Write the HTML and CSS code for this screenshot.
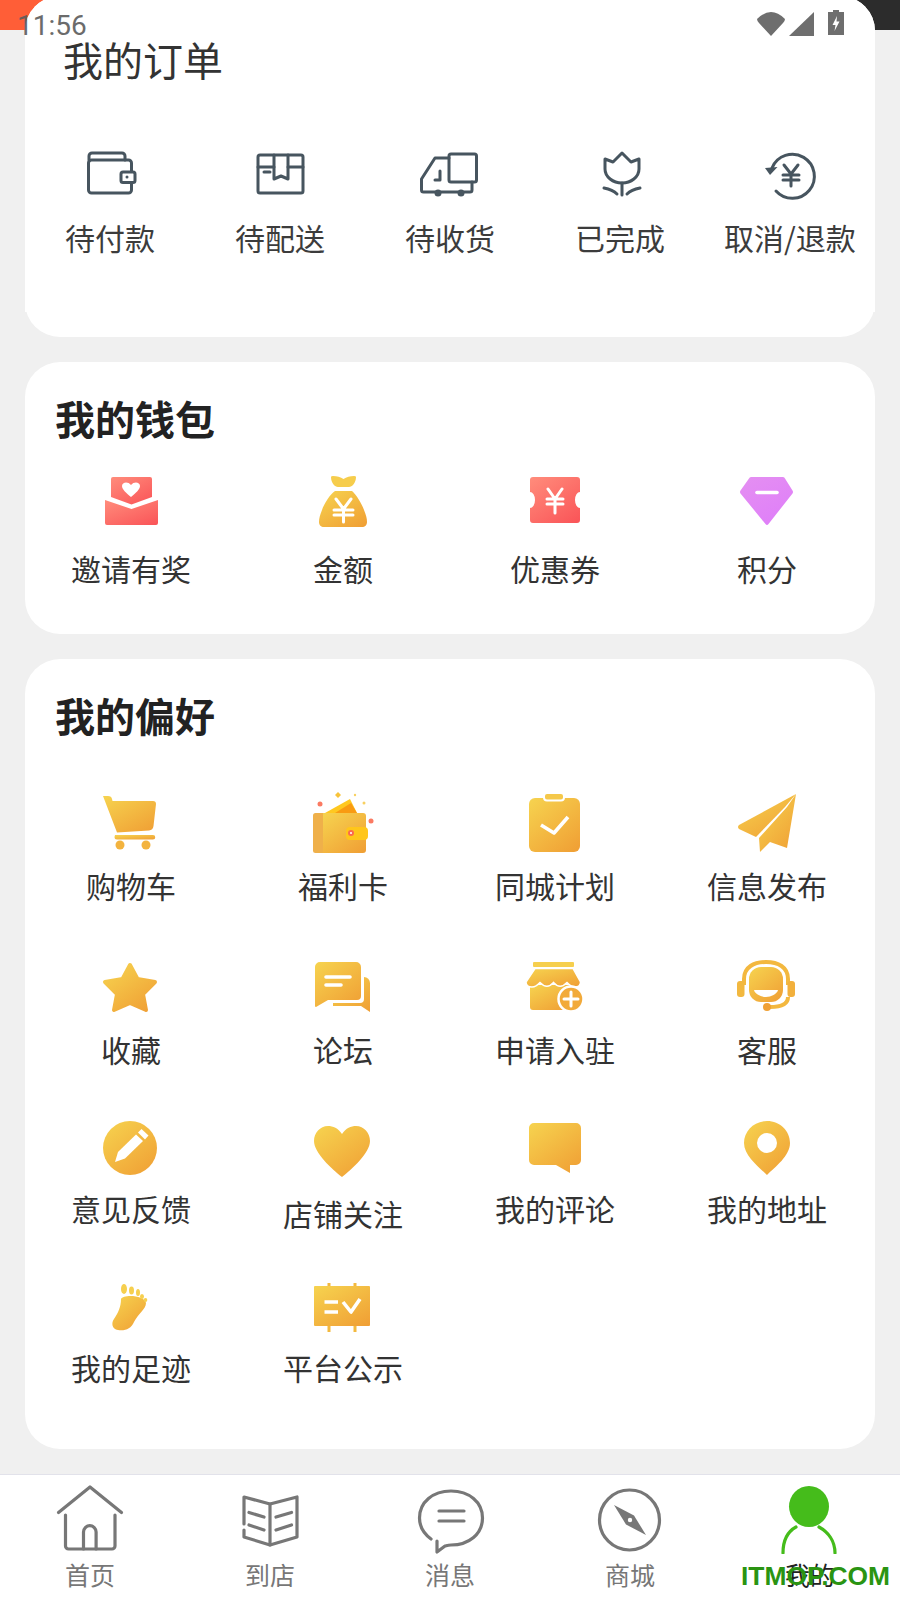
FILE: index.html
```html
<!DOCTYPE html>
<html lang="zh-CN">
<head>
    <meta charset="UTF-8">
    <meta name="viewport" content="width=device-width, initial-scale=1.0">
    <title>我的</title>
    <link rel="stylesheet" href="styles.css">
</head>
<body>
    <!-- shared gradients for the filled icons -->
    <svg class="defs" width="0" height="0">
        <defs>
            <linearGradient id="gold" x1="0.1" y1="0" x2="0.9" y2="1">
                <stop offset="0" stop-color="#f6d14e"/>
                <stop offset="1" stop-color="#f0a035"/>
            </linearGradient>
            <linearGradient id="red" x1="0.1" y1="0" x2="0.9" y2="1">
                <stop offset="0" stop-color="#ff8a7a"/>
                <stop offset="1" stop-color="#fa5659"/>
            </linearGradient>
            <linearGradient id="purple" x1="0.2" y1="0" x2="0.8" y2="1">
                <stop offset="0" stop-color="#e48ef2"/>
                <stop offset="1" stop-color="#df7ef9"/>
            </linearGradient>
        </defs>
    </svg>

    <div class="status-bar">
        <span class="status-time">11:56</span>
        <svg class="status-icons" width="88" height="30" viewBox="0 0 88 30">
            <path d="M0 11Q14 -3 28 11Q28 13 26 15L14 28L2 15Q0 13 0 11Z"/>
            <path d="M57 4V28H32Z"/>
            <path d="M76 2H82V4H87V27H71V4H76Z"/>
            <path class="bolt" d="M80 8L75.500 17H78.500L77.500 23L82.500 13.500H79.500Z"/>
        </svg>
    </div>

    <div class="page">
        <div class="top-strip"></div>

        <section class="card card-orders">
            <div class="orders-panel">
                <h2 class="orders-title">我的订单</h2>
                <div class="orders-row">
                    <div class="item">
                        <svg class="icon line-icon" viewBox="0 0 60 60">
                            <path d="M9 16V12a3 3 0 0 1 3-3H42a3 3 0 0 1 3 3V16"/>
                            <rect x="8.500" y="16" width="43" height="33" rx="3"/>
                            <rect class="white" x="41" y="28" width="14" height="10.500" rx="2"/>
                            <circle class="dot" cx="47" cy="33" r="1.500"/>
                        </svg>
                        <span class="label">待付款</span>
                    </div>
                    <div class="item">
                        <svg class="icon line-icon" viewBox="0 0 60 60">
                            <rect x="8" y="11" width="45" height="38" rx="2"/>
                            <path d="M8 23H24M38 23H53"/>
                            <path d="M24 11V35L31 32L38 35V11"/>
                            <path d="M14 28H20"/>
                        </svg>
                        <span class="label">待配送</span>
                    </div>
                    <div class="item">
                        <svg class="icon line-icon" viewBox="0 0 60 60">
                            <rect x="29" y="10" width="27.500" height="28" rx="2"/>
                            <path d="M29 14H15L1.500 35V46a2 2 0 0 0 2 2H50a2 2 0 0 0 2-2V38"/>
                            <path d="M20 27V36H15"/>
                            <circle class="dot" cx="18" cy="49" r="3.500"/>
                            <circle class="dot" cx="41" cy="49" r="3.500"/>
                        </svg>
                        <span class="label">待收货</span>
                    </div>
                    <div class="item">
                        <svg class="icon line-icon" viewBox="0 0 60 60">
                            <path d="M15 15L23 18L32 9L41 18L49 15V25C49 33 41 39 32 39C23 39 15 33 15 25Z"/>
                            <path d="M32 39V51"/>
                            <path d="M14 44C19 45 24 47 27 50M50 44C45 45 40 47 37 50"/>
                        </svg>
                        <span class="label">已完成</span>
                    </div>
                    <div class="item">
                        <svg class="icon line-icon" viewBox="0 0 60 60">
                            <path d="M12 24A22 22 0 1 1 16 47"/>
                            <path class="dot" d="M5 24L17.500 23L10 31Z"/>
                            <path d="M24 21L31 30L38 21M23 31H39M23 36H39M31 30V42"/>
                        </svg>
                        <span class="label label-wide">取消/退款</span>
                    </div>
                </div>
            </div>
        </section>

        <section class="card card-wallet">
            <h2 class="card-title">我的钱包</h2>
            <div class="wallet-row">
                <div class="item">
                    <svg class="icon" viewBox="0 0 60 60">
                        <path fill="url(#red)" d="M12 5H49a2 2 0 0 1 2 2V25L30.500 32.500L10 25V7a2 2 0 0 1 2-2Z"/>
                        <path fill="url(#red)" d="M4 28L30.500 37L57 28V51a2 2 0 0 1-2 2H6a2 2 0 0 1-2-2Z"/>
                        <path fill="#fff" d="M30 25C25 21 21 17 21 14C21 10 27 9 30 13C33 9 39 10 39 14C39 17 35 21 30 25Z"/>
                    </svg>
                    <span class="label">邀请有奖</span>
                </div>
                <div class="item">
                    <svg class="icon" viewBox="0 0 60 60">
                        <path fill="#f6cd4c" d="M17 5Q17 4 19 4Q25 4 29.500 7Q34 4 40 4Q42 4 42 5C42 11 38 15 35 15H24C21 15 17 11 17 5Z"/>
                        <path fill="url(#gold)" d="M21 19H38C42 22 48 32 50 38C52 43 53 46 53 50C53 53 51 55 48 55H10C7 55 5 53 5 50C5 46 6 43 8 38C10 32 16 22 21 19Z"/>
                        <path class="yen" d="M22 27L29.500 37L37 27M20 38H39M20 43H39M29.500 37V50"/>
                    </svg>
                    <span class="label">金额</span>
                </div>
                <div class="item">
                    <svg class="icon" viewBox="0 0 60 60">
                        <path fill="url(#red)" d="M7 5H51a3 3 0 0 1 3 3V20a5 8 0 0 0 0 16V48a3 3 0 0 1-3 3H7a3 3 0 0 1-3-3V36a5 8 0 0 0 0-16V8a3 3 0 0 1 3-3Z"/>
                        <path class="yen" d="M22 17L29 27L36 17M21 27H37M21 32H37M29 27V41"/>
                    </svg>
                    <span class="label">优惠券</span>
                </div>
                <div class="item">
                    <svg class="icon" viewBox="0 0 60 60">
                        <path fill="url(#purple)" d="M12 5H44Q45.500 5 46 6.500L53.500 18.500Q54.500 20 53.500 21.500L29.500 52Q28 54 26.500 52L1.500 21.500Q0.500 20 1.500 18.500L10 6.500Q10.500 5 12 5Z"/>
                        <path class="yen yen-thick yen-round" d="M18 20.500H38"/>
                    </svg>
                    <span class="label">积分</span>
                </div>
            </div>
        </section>

        <section class="card card-prefs">
            <h2 class="card-title">我的偏好</h2>

            <div class="prefs-row prefs-row-1">
                <div class="item">
                    <svg class="icon" viewBox="0 0 60 60">
                        <path fill="url(#gold)" d="M2 2H7Q10.500 2 11 5L11.500 7H52Q55 7 55 10L52.500 32Q52 36 48 36.500L16 38.500Z"/>
                        <path fill="url(#gold)" d="M14 41H52a2 2 0 0 1 0 4.500H16Q13.500 45.500 13.500 43Z"/>
                        <ellipse fill="#f3b33e" cx="19" cy="51" rx="4.500" ry="4.500"/>
                        <ellipse fill="#f3b33e" cx="45" cy="51" rx="4.500" ry="4.500"/>
                    </svg>
                    <span class="label">购物车</span>
                </div>
                <div class="item">
                    <svg class="icon" viewBox="0 0 60 60">
                        <path fill="#ffc820" d="M11 19L36 5L43 19Z"/>
                        <path fill="#f99b12" d="M21 19L37 9L43 19Z"/>
                        <path fill="url(#gold)" d="M9 19H49a3 3 0 0 1 3 3V56a3 3 0 0 1-3 3H9Z"/>
                        <path fill="#efb04a" d="M9 19H1.500A2.500 2.500 0 0 0-1 21.500V56.500A2.500 2.500 0 0 0 1.500 59H9Z"/>
                        <rect fill="#ffc61a" x="32" y="33" width="22" height="13" rx="4"/>
                        <circle fill="#fa6a50" cx="37" cy="39" r="3"/>
                        <circle fill="#fff" cx="37" cy="39" r="1"/>
                        <circle fill="#fb7a62" cx="6" cy="10" r="2.500"/>
                        <circle fill="#fb7a62" cx="57" cy="27" r="2.500"/>
                        <path fill="#f8c33a" d="M24 -2L27 1L24 4L21 1Z"/>
                        <circle fill="#f8d060" cx="41" cy="1" r="1.200"/>
                        <circle fill="#f8d060" cx="50" cy="9" r="1.500"/>
                    </svg>
                    <span class="label">福利卡</span>
                </div>
                <div class="item">
                    <svg class="icon" viewBox="0 0 60 60">
                        <path fill="url(#gold)" d="M9 4H48a6 6 0 0 1 6 6V52a6 6 0 0 1-6 6H9a6 6 0 0 1-6-6V10a6 6 0 0 1 6-6Z"/>
                        <rect fill="#f5c84a" stroke="#fff" stroke-width="2" x="18" y="-1" width="20" height="7.500" rx="3"/>
                        <path class="yen yen-thick" d="M15 31L28 39L42 23"/>
                    </svg>
                    <span class="label">同城计划</span>
                </div>
                <div class="item">
                    <svg class="icon" viewBox="0 0 60 60">
                        <path fill="url(#gold)" d="M57 0L0 31Q-2 33 0 35L17 43L46 13Z"/>
                        <path fill="url(#gold)" d="M57 0L48 54L31 48L21 58L20 44L48 13Z"/>
                    </svg>
                    <span class="label">信息发布</span>
                </div>
            </div>

            <div class="prefs-row prefs-row-2">
                <div class="item">
                    <svg class="icon" viewBox="0 0 60 60">
                        <path fill="url(#gold)" stroke="url(#gold)" stroke-width="4" stroke-linejoin="round" d="M29 8L36.500 22L54 25L42 37L45 53L29 46L13 53L16 37L4 25L21.500 22Z"/>
                    </svg>
                    <span class="label">收藏</span>
                </div>
                <div class="item">
                    <svg class="icon" viewBox="0 0 60 60">
                        <path fill="url(#gold)" d="M6 5H42a5 5 0 0 1 5 5V39a4 4 0 0 1-4 4H14L2 50Q1 50 1 49V10a5 5 0 0 1 5-5Z"/>
                        <path fill="url(#gold)" d="M50 20a6 6 0 0 1 6 6V55L47 49H19V46H46a4 4 0 0 0 4-4Z"/>
                        <path class="yen yen-thick yen-round" d="M12 20H36M12 28H27"/>
                    </svg>
                    <span class="label">论坛</span>
                </div>
                <div class="item">
                    <svg class="icon" viewBox="0 0 60 60">
                        <rect fill="#f6cf4e" x="7" y="5" width="41" height="5" rx="1"/>
                        <path fill="url(#gold)" d="M4 28H44V50a3 3 0 0 1-3 3H7a3 3 0 0 1-3-3Z"/>
                        <path fill="url(#gold)" stroke="#fff" stroke-width="1.500" d="M9 11.500H47L54.500 25Q54.500 30 49 30Q45 30 41 25.500Q34 33 27.500 25.500Q21 33 14 25.500Q10 30 6 30Q0 30 0 25Z"/>
                        <circle fill="#f2aa3a" stroke="#fff" stroke-width="2.500" cx="45" cy="42" r="12.500"/>
                        <path class="yen" d="M45 35V49M38 42H52"/>
                    </svg>
                    <span class="label">申请入驻</span>
                </div>
                <div class="item">
                    <svg class="icon" viewBox="0 0 60 60">
                        <path class="gold-line" d="M5 28V22C5 10 15 5 27 5C39 5 49 10 49 22V28"/>
                        <rect fill="#f2b83f" x="-2" y="24" width="7.500" height="16" rx="3"/>
                        <rect fill="#f2b03c" x="48.500" y="24" width="7.500" height="16" rx="3"/>
                        <rect fill="url(#gold)" x="10" y="10" width="34" height="35" rx="12"/>
                        <path fill="#fff" d="M15 33H39C38 37 32 40 27 40C22 40 16 37 15 33Z"/>
                        <path class="gold-line" d="M49 40C49 47 42 50 31 50"/>
                        <circle fill="#f0a035" cx="28" cy="50" r="4"/>
                    </svg>
                    <span class="label">客服</span>
                </div>
            </div>

            <div class="prefs-row prefs-row-3">
                <div class="item">
                    <svg class="icon" viewBox="0 0 60 60">
                        <circle fill="url(#gold)" cx="29" cy="29" r="27"/>
                        <path fill="#fff" d="M14 43L17 33L35 15.500L42 22L24 39.500Z"/>
                        <path fill="#fff" d="M37 13.500L40.500 10L47.500 16.500L44 20.500Z"/>
                    </svg>
                    <span class="label">意见反馈</span>
                </div>
                <div class="item item-low">
                    <svg class="icon" viewBox="0 0 60 60">
                        <path fill="url(#gold)" d="M28 15C24 9 19 7 14 7C6 7 0 14 0 22C0 34 18 50 28 58C38 50 56 34 56 22C56 14 50 7 42 7C37 7 32 9 28 15Z"/>
                    </svg>
                    <span class="label">店铺关注</span>
                </div>
                <div class="item">
                    <svg class="icon" viewBox="0 0 60 60">
                        <path fill="url(#gold)" d="M8 4H50a5 5 0 0 1 5 5V41a5 5 0 0 1-5 5H44V54L30 46H8a5 5 0 0 1-5-5V9a5 5 0 0 1 5-5Z"/>
                    </svg>
                    <span class="label">我的评论</span>
                </div>
                <div class="item">
                    <svg class="icon" viewBox="0 0 60 60">
                        <path fill="url(#gold)" fill-rule="evenodd" d="M28 2C15 2 5 12 5 24C5 37 20 48 28 56C36 48 51 37 51 24C51 12 41 2 28 2ZM28 14a10 10 0 1 1 0 20a10 10 0 1 1 0-20Z"/>
                    </svg>
                    <span class="label">我的地址</span>
                </div>
            </div>

            <div class="prefs-row prefs-row-4">
                <div class="item">
                    <svg class="icon" viewBox="0 0 60 60">
                        <path fill="url(#gold)" d="M20 22C22 17 44 18 45 26C45 32 37 37 33 45C30 52 24 54 17 53C11 52 10 46 13 42C17 36 20 30 20 22Z"/>
                        <ellipse fill="#f6cf4e" cx="23" cy="12" rx="3" ry="5"/>
                        <ellipse fill="#f6cf4e" cx="30.500" cy="13.500" rx="2.500" ry="4"/>
                        <ellipse fill="#f6cf4e" cx="37" cy="15.500" rx="2" ry="3.500"/>
                        <ellipse fill="#f6cf4e" cx="41" cy="19.500" rx="2" ry="2.500"/>
                        <ellipse fill="#f6cf4e" cx="44.500" cy="23" rx="1.800" ry="2"/>
                    </svg>
                    <span class="label">我的足迹</span>
                </div>
                <div class="item">
                    <svg class="icon" viewBox="0 0 60 60">
                        <path d="M15 6V55M41 6V55" stroke="#f3b93f" stroke-width="3"/>
                        <rect fill="url(#gold)" x="0" y="9" width="56" height="40" rx="1"/>
                        <path class="yen yen-thick" d="M10.500 25H24M10.500 35H24M29 25L37 35L46 22"/>
                    </svg>
                    <span class="label">平台公示</span>
                </div>
            </div>
        </section>

        <nav class="tabbar">
            <a class="tab">
                <svg class="tab-icon" viewBox="0 0 70 70">
                    <path d="M3.500 28.500L35 3L66.500 28.500"/>
                    <path d="M10.500 31V62a3 3 0 0 0 3 3H57a3 3 0 0 0 3-3V31"/>
                    <path d="M28.500 65V48a6.300 6.300 0 0 1 12.600 0V65"/>
                </svg>
                <span>首页</span>
            </a>
            <a class="tab">
                <svg class="tab-icon" viewBox="0 0 70 70">
                    <path d="M9 40V13L35 20L62 13V53L35 61L9 53V46"/>
                    <path d="M35 20V61"/>
                    <path d="M14 28.500L29 33M14 41L29 46M41 33L56.500 28.500M41 46L56.500 41"/>
                </svg>
                <span>到店</span>
            </a>
            <a class="tab">
                <svg class="tab-icon" viewBox="0 0 70 70">
                    <path d="M16 55C8 49 4.500 42 4.500 34C4.500 18 18 7 36 7C54 7 67.500 18 67.500 34C67.500 50 54 61 36 61C33 61 32 61.500 30 62L22 68V57"/>
                    <path d="M24 27H49M24 37H49"/>
                </svg>
                <span>消息</span>
            </a>
            <a class="tab">
                <svg class="tab-icon" viewBox="0 0 70 70">
                    <circle cx="34.500" cy="36" r="30"/>
                    <path class="needle" d="M19 21L39 31.600L51 51L31 40.400Z"/>
                    <circle class="needle-hole" cx="35" cy="36" r="2.200"/>
                </svg>
                <span>商城</span>
            </a>
            <a class="tab tab-active">
                <svg class="tab-icon" viewBox="0 0 70 70">
                    <ellipse class="head" cx="34" cy="22.500" rx="20" ry="20.500"/>
                    <path d="M8 69C8 57 12 48 21 43M44 43C53 48 60 57 60 69"/>
                </svg>
                <span>我的</span>
            </a>
        </nav>
    </div>

    <div class="watermark">ITMOP.COM</div>
</body>
</html>
```

FILE: styles.css
```css
* {
    box-sizing: border-box;
}

body {
    margin: 0;
    background-color: #f0f0f0;
    font-family: "Noto Sans CJK SC", "Noto Sans", sans-serif;
    color: #333;
    overflow: hidden;
}

.defs {
    position: absolute;
}

.page {
    height: 1600px;
    display: flex;
    flex-direction: column;
    overflow: hidden;
}

/* what's left of the page header, only visible behind the first card's corners */
.top-strip {
    height: 30px;
    flex-shrink: 0;
    margin-bottom: -34px;
    background: linear-gradient(90deg, #ff5e37 50%, #2c2c2c 50%);
}

.status-bar {
    position: absolute;
    top: 0;
    left: 0;
    width: 900px;
    height: 40px;
    z-index: 2;
}

.status-time {
    position: absolute;
    top: 11px;
    left: 17px;
    font-family: Roboto, sans-serif;
    font-size: 28px;
    line-height: 30px;
    color: #5c5c5c;
    opacity: 0.9;
}

.status-icons {
    position: absolute;
    top: 8px;
    left: 757px;
    fill: #6e6e6e;
}

.status-icons .bolt {
    fill: #fff;
}

.card {
    flex-shrink: 0;
    margin: 0 25px 25px;
    background-color: #fff;
    border-radius: 35px;
    position: relative;
}

.card-orders {
    height: 341px;
}

/* the list sits square on top of the rounded card, which leaves a small step at the sides */
.orders-panel {
    height: 316px;
    padding-top: 38px;
    background-color: #fff;
    border-radius: 35px 35px 0 0;
}

.orders-title {
    margin: 0 0 60px 38px;
    font-size: 40px;
    font-weight: 400;
    line-height: 50px;
    color: #333;
}

.orders-row {
    display: grid;
    grid-template-columns: repeat(5, 170px);
}

.orders-row .label {
    margin-top: 13px;
    color: #3c3c3c;
}

.card-title {
    margin: 0;
    padding-left: 30px;
    font-size: 40px;
    font-weight: 700;
    line-height: 50px;
    color: #222;
}

.card-wallet {
    height: 272px;
    padding-top: 31px;
}

.wallet-row {
    display: grid;
    grid-template-columns: repeat(4, 212px);
    margin-top: 29px;
}

.wallet-row .label {
    margin-top: 16px;
}

.card-prefs {
    height: 790px;
    padding-top: 31px;
}

.prefs-row {
    display: grid;
    grid-template-columns: repeat(4, 212px);
}

/* icons sit a little right of their labels in the later columns */
.wallet-row .item:nth-child(2) .icon,
.wallet-row .item:nth-child(3) .icon,
.prefs-row .item:nth-child(2) .icon,
.prefs-row .item:nth-child(3) .icon {
    margin-left: 2px;
}

.wallet-row .item:nth-child(4) .icon,
.prefs-row .item:nth-child(4) .icon {
    margin-left: 4px;
}

.prefs-row-1 {
    margin-top: 54px;
    height: 163px;
}

.prefs-row-1 .label {
    margin-top: 11px;
}

.prefs-row-2 {
    height: 162px;
}

.prefs-row-2 .label {
    margin-top: 12px;
}

.prefs-row-3 {
    height: 158px;
}

.prefs-row-3 .label {
    margin-top: 9px;
}

.prefs-row-3 .item-low .label {
    margin-top: 14px;
}

.prefs-row-4 .label {
    margin-top: 10px;
}

.item {
    display: flex;
    flex-direction: column;
    align-items: center;
}

.icon {
    display: block;
    width: 60px;
    height: 60px;
    overflow: visible;
}

.label {
    font-size: 30px;
    line-height: 40px;
    color: #333;
    white-space: nowrap;
}

.line-icon {
    fill: none;
    stroke: #47555f;
    stroke-width: 3;
    stroke-linecap: round;
    stroke-linejoin: round;
}

.line-icon .dot {
    fill: #47555f;
    stroke: none;
}

.line-icon .white {
    fill: #fff;
}

.yen {
    fill: none;
    stroke: #fff;
    stroke-width: 3;
    stroke-linecap: round;
    stroke-linejoin: round;
}

.yen-thick {
    stroke-width: 3.6;
    stroke-linecap: butt;
}

.yen-round {
    stroke-linecap: round;
}

.gold-line {
    fill: none;
    stroke: #f3b83f;
    stroke-width: 4;
}

.tabbar {
    flex-shrink: 0;
    height: 126px;
    padding-top: 9px;
    display: grid;
    grid-template-columns: repeat(5, 180px);
    background-color: #fff;
    border-top: 1px solid #e2e2ea;
}

.tab {
    display: flex;
    flex-direction: column;
    align-items: center;
    font-size: 25px;
    line-height: 30px;
    color: #777;
}

.tab span {
    margin-top: 5px;
}

.tab-icon {
    display: block;
    width: 70px;
    height: 70px;
    fill: none;
    stroke: #777;
    stroke-width: 3.2;
    stroke-linecap: round;
    stroke-linejoin: round;
}

.tab-icon .needle {
    fill: #777;
    stroke: none;
}

.tab-icon .needle-hole {
    fill: #fff;
    stroke: none;
}

.tab-active {
    color: #222;
}

.tab-active .tab-icon {
    stroke: #45bc1b;
    stroke-width: 3.2;
}

.tab-active .head {
    fill: #45bc1b;
    stroke: none;
}

.watermark {
    position: absolute;
    top: 1561px;
    left: 741px;
    font-family: "Liberation Sans", sans-serif;
    font-size: 26.400px;
    font-weight: 700;
    line-height: 30px;
    color: #2a9412;
    white-space: nowrap;
}
```
